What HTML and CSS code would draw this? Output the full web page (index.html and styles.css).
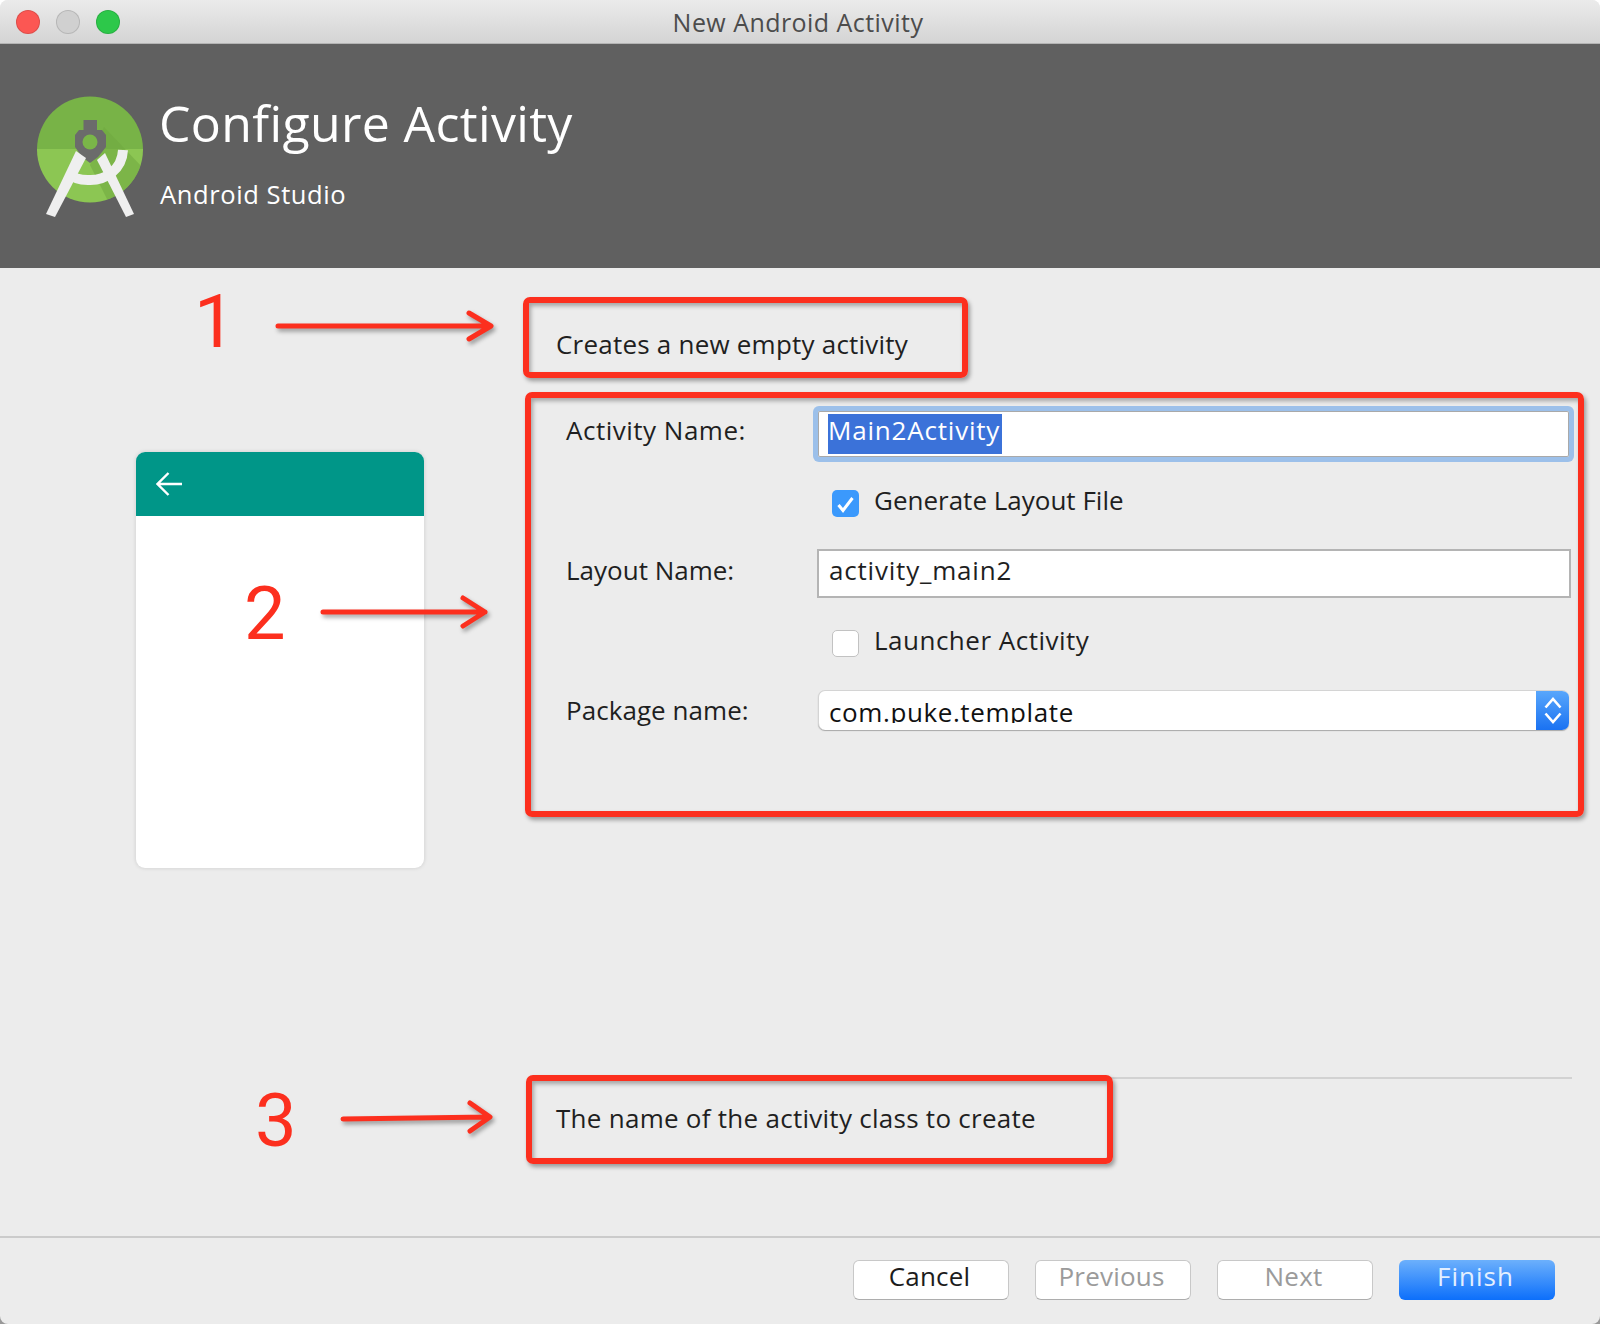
FILE: index.html
```html
<!DOCTYPE html>
<html lang="en">
<head>
<meta charset="utf-8">
<title>New Android Activity</title>
<link rel="stylesheet" href="styles.css">
</head>
<body>
<div class="window">
  <div class="titlebar">
    <div class="lights">
      <span class="light red"></span>
      <span class="light gray"></span>
      <span class="light green"></span>
    </div>
    <div class="title">New Android Activity</div>
  </div>

  <header class="banner">
    <svg class="logo" width="140" height="140" viewBox="0 0 140 140">
      <defs><clipPath id="disc"><circle cx="70" cy="64.5" r="53"/></clipPath></defs>
      <g clip-path="url(#disc)">
        <rect x="0" y="0" width="140" height="64" fill="#78b347"/>
        <rect x="0" y="64" width="140" height="76" fill="#8cc653"/>
        <polygon points="84,42 125,85 125,120 90,120 70,80" fill="#6fa83f" opacity=".55"/>
      </g>
      <path d="M63.5 35H77V45H82L86 50V62L78 72L70 78L62 72L55 62V50L59 45H63.5Z" fill="#6b6b6b"/>
      <circle cx="70" cy="57" r="7.5" fill="#7ab648"/>
      <path d="M103 65C102 85 85 96 68 95C58 95 52 92 48 88" stroke="#efefef" stroke-width="10" fill="none"/>
      <polygon points="56,66 66,73 35,132 26,129" fill="#efefef"/>
      <polygon points="85,68 77,75 106,132 114,129" fill="#efefef"/>
    </svg>
    <div class="banner-text">
      <h1 class="banner-title">Configure Activity</h1>
      <div class="banner-sub">Android Studio</div>
    </div>
  </header>

  <main class="content">
    <div class="preview-col">
      <div class="phone">
        <div class="phone-bar">
          <svg width="26" height="24" viewBox="0 0 26 24"><path d="M26 12H2M12.5 1L1.5 12L12.5 23" stroke="#fff" stroke-width="2.4" fill="none"/></svg>
        </div>
      </div>
    </div>

    <div class="form-col">
      <p class="description">Creates a new empty activity</p>

      <div class="form">
        <label class="label label-first">Activity Name:</label>
        <div class="input input-focus"><span class="selected">Main2Activity</span></div>

        <div class="check-row check-row-first">
          <span class="checkbox checked">
            <svg width="27" height="27" viewBox="0 0 27 27"><path d="M6.5 15L11 20.5L20.5 8" stroke="#fff" stroke-width="3" fill="none"/></svg>
          </span>
          <span class="check-label">Generate Layout File</span>
        </div>

        <label class="label label-second">Layout Name:</label>
        <div class="input input-plain">activity_main2</div>

        <div class="check-row">
          <span class="checkbox"></span>
          <span class="check-label check-label-wide">Launcher Activity</span>
        </div>

        <label class="label label-third">Package name:</label>
        <div class="combo">
          <div class="combo-text">com.puke.template</div>
          <div class="combo-btn">
            <svg width="33" height="40" viewBox="0 0 33 40"><path d="M9.5 17.5L17 9L24.5 17.5M9.5 23.5L17 32L24.5 23.5" stroke="#fff" stroke-width="2.6" fill="none"/></svg>
          </div>
        </div>
      </div>

      <div class="help">The name of the activity class to create</div>
    </div>
  </main>

  <footer class="footer">
    <button class="btn">Cancel</button>
    <button class="btn btn-off">Previous</button>
    <button class="btn btn-off">Next</button>
    <button class="btn btn-main">Finish</button>
  </footer>

  <div class="mark mark-a"></div>
  <div class="mark mark-b"></div>
  <div class="mark mark-c"></div>
  <span class="num num-1">1</span>
  <span class="num num-2">2</span>
  <span class="num num-3">3</span>
  <svg class="arrows" width="1600" height="1324" viewBox="0 0 1600 1324">
    <path d="M278 326H490M469 313L491 326L469 339"/>
    <path d="M323 612H485M463 598L485 612L463 626"/>
    <path d="M343 1119L489 1117M470 1103L490 1117L470 1131"/>
  </svg>
</div>
</body>
</html>
```
FILE: styles.css
```css
* { box-sizing: border-box; }
html, body { margin: 0; padding: 0; }
body { background: linear-gradient(#fff 50%, #999 50%); font-family: "Open Sans", "DejaVu Sans", sans-serif; color: #1f1f1f; }

.window {
  position: relative;
  width: 1600px;
  height: 1324px;
  display: flex;
  flex-direction: column;
  background: #ececec;
  overflow: hidden;
  border-radius: 8px;
}

.titlebar {
  position: relative;
  flex: none;
  height: 44px;
  display: flex;
  align-items: center;
  justify-content: center;
  background: linear-gradient(#ebebeb, #d4d4d4);
  border-bottom: 1px solid #b4b4b4;
}
.lights { position: absolute; left: 16px; top: 10px; display: flex; gap: 16px; }
.light { width: 24px; height: 24px; border-radius: 50%; border: 1px solid rgba(0,0,0,.12); }
.red { background: #fc5753; }
.gray { background: #d0d0d0; }
.green { background: #2dc84a; }
.title { font-size: 25px; color: #4c4c4c; line-height: 44px; letter-spacing: .45px; margin-right: 4px; }

.banner {
  flex: none;
  height: 224px;
  background: #606060;
  display: flex;
  padding: 41px 0 0 20px;
  color: #fff;
}
.logo { flex: none; }
.banner-title { margin: 0 0 0 -1px; font-size: 50px; font-weight: 400; line-height: 76px; letter-spacing: .35px; }
.banner-sub { margin-top: 15px; font-size: 25.5px; line-height: 36px; letter-spacing: .6px; }

.content { flex: 1; display: flex; padding-right: 28px; min-height: 0; }
.preview-col { flex: none; width: 556px; padding: 184px 0 0 136px; }
.phone {
  width: 288px;
  height: 416px;
  background: #fff;
  border-radius: 9px;
  box-shadow: 0 0 4px rgba(0,0,0,.14);
  overflow: hidden;
}
.phone-bar { height: 64px; background: #009688; display: flex; align-items: center; padding-left: 20px; }
.phone-bar svg { display: block; }

.form-col { flex: 1; display: flex; flex-direction: column; padding-top: 60px; }
.description { margin: 0; font-size: 26px; line-height: 32px; letter-spacing: .22px; }

.form {
  margin-top: 51px;
  padding-left: 10px;
  display: grid;
  grid-template-columns: 252px 751px;
  grid-template-rows: 46px 28px 49px 28px 40px;
  row-gap: 32px;
  font-size: 26px;
}
.label { line-height: 40px; display: block; letter-spacing: .25px; }
.label-first { margin-top: -1px; letter-spacing: .5px; }
.label-second { margin-top: 1px; letter-spacing: 0; }
.label-third { letter-spacing: .05px; }

.input { background: #fff; }
.input-focus {
  display: flex;
  align-items: flex-start;
  padding: 3px 0 0 10px;
  box-shadow: 0 0 0 1px #a9a9a9 inset, 0 0 0 5px #9cc0ea;
  border-radius: 2px;
}
.selected {
  display: block;
  background: #3b72d9;
  color: #fff;
  line-height: 32px;
  padding: 0 2px 8px 0;
  height: 40px;
  letter-spacing: .8px;
}
.input-plain {
  margin-left: -1px;
  width: 754px;
  border: 2px solid #b4b4b4;
  padding-left: 10px;
  line-height: 38px;
  letter-spacing: .8px;
}

.check-row { grid-column: 2; display: flex; align-items: flex-start; margin-left: 14px; }
.check-row-first { margin-top: 1px; }
.checkbox {
  flex: none;
  width: 27px;
  height: 27px;
  border-radius: 5px;
  background: #fff;
  border: 1px solid #c2c2c2;
}
.checkbox.checked { background: #3b99fc; border: 0; }
.checkbox svg { display: block; }
.check-label { margin-left: 15px; margin-top: -3px; line-height: 26px; }
.check-label-wide { letter-spacing: .5px; }

.combo {
  display: flex;
  background: #fff;
  border-radius: 7px;
  border-top: 1px solid #d4d4d4;
  border-left: 1px solid #d4d4d4;
  box-shadow: 0 1px 1px #a8a8a8;
  overflow: hidden;
}
.combo-text {
  flex: 1;
  height: 32px;
  overflow: hidden;
  padding-left: 10px;
  line-height: 43px;
  color: #111;
  letter-spacing: .6px;
}
.combo-btn { flex: none; width: 33px; margin-top: -1px; background: linear-gradient(#5aa8fc, #1a72f2); }
.combo-btn svg { display: block; }

.help {
  margin-top: auto;
  flex: none;
  height: 159px;
  border-top: 2px solid #d2d2d2;
  padding-top: 23px;
  font-size: 26px;
  line-height: 32px;
  letter-spacing: .27px;
}

.footer {
  flex: none;
  height: 88px;
  border-top: 2px solid #cbcbcb;
  padding: 22px 45px 0 0;
  display: flex;
  justify-content: flex-end;
  gap: 26px;
}
.btn {
  width: 156px;
  height: 40px;
  padding: 0 3px 8px 0;
  background: #fff;
  border: 1px solid #c8c8c8;
  border-bottom-color: #adadad;
  border-radius: 6px;
  font: 400 26px/30px "Open Sans", "DejaVu Sans", sans-serif;
  color: #1c1c1c;
  letter-spacing: .2px;
  display: block;
}
.btn-off { color: #9b9b9b; }
.btn-main {
  background: linear-gradient(#6cb0fc, #0c6ffb);
  border: 0;
  color: #e3efff;
  letter-spacing: 1px;
}

.mark {
  position: absolute;
  border: 6px solid #fc2f1e;
  border-radius: 7px;
  box-shadow: 2px 3px 4px rgba(0,0,0,.35), inset 2px 3px 4px rgba(0,0,0,.3);
}
.mark-a { left: 523px; top: 297px; width: 445px; height: 81px; }
.mark-b { left: 525px; top: 392px; width: 1059px; height: 425px; }
.mark-c { left: 526px; top: 1075px; width: 587px; height: 89px; }

.num {
  position: absolute;
  font: 400 74px/74px Roboto, "Liberation Sans", sans-serif;
  color: #fc2f1e;
}
.num-1 { left: 194px; top: 285px; }
.num-2 { left: 244px; top: 577px; }
.num-3 { left: 255px; top: 1084px; }

.arrows {
  position: absolute;
  left: 0;
  top: 0;
  fill: none;
  stroke: #fc2f1e;
  stroke-width: 5;
  stroke-linecap: round;
  stroke-linejoin: round;
  filter: drop-shadow(2px 3px 2px rgba(0,0,0,.35));
  pointer-events: none;
}
```
